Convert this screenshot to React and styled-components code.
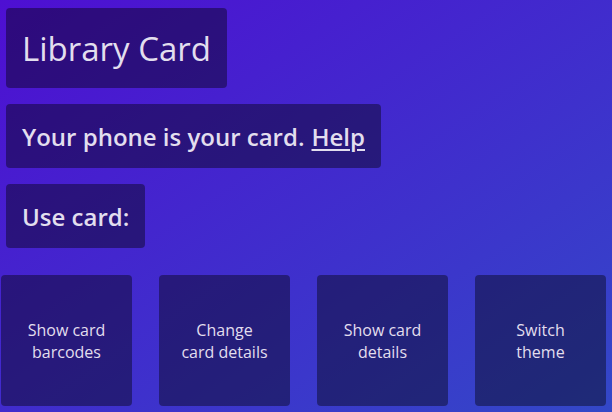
import React from 'react';
import styled, { createGlobalStyle } from 'styled-components';

const GlobalStyle = createGlobalStyle`
  html, body {
    margin: 0;
    padding: 0;
    height: 100%;
  }
  body {
    font-family: "Open Sans", "Noto Sans", sans-serif;
    background: linear-gradient(to bottom right, #4e0fd2, #3348c8);
    color: #e2deee;
    overflow: hidden;
  }
`;

const Page = styled.main`
  width: 612px;
  height: 412px;
  box-sizing: border-box;
  padding: 8px 0 0 0;
  display: flex;
  flex-direction: column;
  align-items: flex-start;
`;

const Panel = styled.div`
  background: rgba(0, 0, 0, 0.4);
  border-radius: 4px;
  margin-left: 6px;
  margin-bottom: 16px;
  padding: 0 16px;
  box-sizing: border-box;
  height: ${p => (p.$big ? '80px' : '64px')};
  display: flex;
  align-items: center;
  font-size: ${p => (p.$big ? '33px' : '24px')};
  font-weight: ${p => (p.$big ? 400 : 600)};
  white-space: nowrap;
`;

const HelpLink = styled.a`
  color: inherit;
  text-decoration: underline;
  text-underline-offset: 3px;
  text-decoration-thickness: 2px;
  margin-left: 7px;
`;

const Actions = styled.div`
  display: grid;
  grid-template-columns: repeat(4, 131px);
  column-gap: 27px;
  margin-top: 11px;
  margin-left: 1px;
`;

const Action = styled.button`
  height: 131px;
  border: none;
  border-radius: 4px;
  background: rgba(0, 0, 0, 0.4);
  color: #e2deee;
  font-family: "Open Sans", "Noto Sans", sans-serif;
  font-size: 16px;
  line-height: 22px;
  padding: 0 8px;
  cursor: pointer;
`;

const actions = [
  ['Show card', 'barcodes'],
  ['Change', 'card details'],
  ['Show card', 'details'],
  ['Switch', 'theme'],
];

export default function App() {
  return (
    <>
      <GlobalStyle />
      <Page>
        <Panel $big>Library Card</Panel>
        <Panel>
          Your phone is your card.<HelpLink href="#">Help</HelpLink>
        </Panel>
        <Panel>Use card:</Panel>
        <Actions>
          {actions.map(([a, b]) => (
            <Action key={a + b}>
              {a}
              <br />
              {b}
            </Action>
          ))}
        </Actions>
      </Page>
    </>
  );
}
